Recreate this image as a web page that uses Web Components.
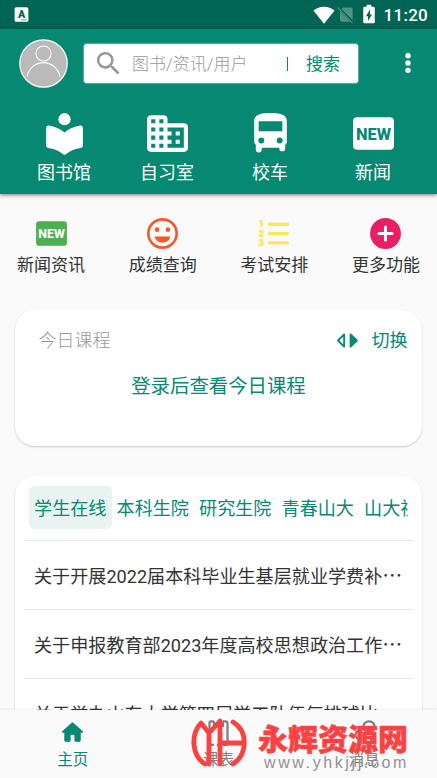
<!DOCTYPE html>
<html lang="zh-CN"><head><meta charset="utf-8"><title>主页</title>
<style>
body{margin:0;width:437px;height:778px;overflow:hidden;background:#fafafa;font-family:Roboto,"Noto Sans CJK SC",sans-serif;color:#333}
</style></head><body><campus-app></campus-app>
<script>
const ICONS={
input:'<rect x="1" y="0.5" width="22" height="23" rx="2.5"/><text x="12" y="17" font-size="17" font-weight="900" text-anchor="middle" fill="#006554">A</text><path d="M12 20.5h9" stroke="#006554" stroke-width="1.5" stroke-dasharray="2 1"/>',
wifi:'<path d="M12 21.5.4 7.2C3 5 7 3 12 3s9 2 11.600 4.200z"/>',
nosim:'<path d="M9 3h10a2 2 0 0 1 2 2v14L7 5zM5 8l13 13H7a2 2 0 0 1-2-2z"/><path d="m2 3 19 20" stroke="currentColor" stroke-width="1.500"/>',
battery:'<path fill-rule="evenodd" d="M17 4h-2.500V2h-5v2H7Q5.700 4 5.700 5.330v15.330Q5.700 22 7 22h10q1.300 0 1.300-1.330V5.330Q18.300 4 17 4zM11 19.500v-5H8.700L13 7v5.500h2.300z"/>',
user:'<circle cx="12" cy="12" r="11.600" fill="#bababa" stroke="#fff" stroke-width=".6"/><circle cx="12" cy="7.100" r="3.700" fill="none" stroke="#fff" stroke-width=".5"/><path d="M4 18.400a8.100 8.100 0 0 1 16 0" fill="none" stroke="#fff" stroke-width=".5"/>',
search:'<path d="M15.500 14h-.79l-.28-.27A6.471 6.471 0 0 0 16 9.500 6.500 6.500 0 1 0 9.500 16c1.610 0 3.090-.59 4.230-1.570l.27.28v.79l5 4.990L20.490 19l-4.990-5zm-6 0C7.010 14 5 11.990 5 9.500S7.010 5 9.500 5 14 7.010 14 9.500 11.990 14 9.500 14z"/>',
more:'<circle cx="12" cy="5.200" r="2.500"/><circle cx="12" cy="12" r="2.500"/><circle cx="12" cy="18.800" r="2.500"/>',
reader:'<circle cx="12" cy="5" r="3"/><path d="M12 11.550C10 9.700 7.200 8.400 4.200 8.050Q3 8 3 9.200v8.700q0 1.100 1.100 1.200c2.700.3 5.100 1.300 7 2.900q.9.700 1.800 0c1.900-1.600 4.300-2.600 7-2.900q1.100-.1 1.100-1.200V9.200q0-1.200-1.200-1.150C16.800 8.400 14 9.700 12 11.550z"/>',
building:'<path fill-rule="evenodd" d="M12 7V5a2 2 0 0 0-2-2H4a2 2 0 0 0-2 2v14a2 2 0 0 0 2 2h16a2 2 0 0 0 2-2V9a2 2 0 0 0-2-2zM6 19H4v-2h2zm0-4H4v-2h2zm0-4H4V9h2zm0-4H4V5h2zm4 12H8v-2h2zm0-4H8v-2h2zm0-4H8V9h2zm0-4H8V5h2zm10 12h-8v-2h2v-2h-2v-2h2v-2h-2V9h8zm-2-8h-2v2h2zm0 4h-2v2h2z"/>',
bus:'<path fill-rule="evenodd" d="M4 16V6c0-3.500 3.580-4 8-4s8 .5 8 4v10q0 1-.8 1.500v1.800a1.450 1.450 0 0 1-2.900 0V19H7.700v.8a1.450 1.450 0 0 1-2.900 0v-2.300Q4 17 4 16zM6.200 6v4.900h11.600V6zM7.500 14a1.450 1.450 0 1 0 0 2.900 1.450 1.450 0 0 0 0-2.900zm9 0a1.450 1.450 0 1 0 0 2.900 1.450 1.450 0 0 0 0-2.900z"/>',
fresh:'<rect x="2" y="4" width="20" height="16" rx="2"/><text x="3.400" y="15" font-family="Roboto" font-size="8.300" font-weight="800" textLength="17.200" lengthAdjust="spacingAndGlyphs" fill="var(--ink,#068873)">NEW</text>',
smile:'<circle cx="12" cy="12" r="9.200" fill="none" stroke="currentColor" stroke-width="1.700"/><circle cx="8.500" cy="9.500" r="1.500"/><circle cx="15.500" cy="9.500" r="1.500"/><path d="M7.300 14q-.5 0-.3.500a5.300 5.300 0 0 0 10 0q.2-.5-.3-.5z"/>',
list:'<path d="M8.500 6h12M8.500 12h12M8.500 18h12" stroke="currentColor" stroke-width="2" stroke-linecap="round"/><g font-size="5.800" font-weight="900" font-family="Roboto" stroke="currentColor" stroke-width=".3"><text x="1.800" y="8">1</text><text x="1.800" y="14">2</text><text x="1.800" y="20">3</text></g>',
plus:'<circle cx="12" cy="12" r="10"/><path d="M12 7.800v8.400M7.800 12h8.400" stroke="#fff" stroke-width="2" stroke-linecap="round"/>',
swap:'<path d="M8.500 5.600v12.800L2 12z" fill="none" stroke="currentColor" stroke-width="1.900" stroke-linejoin="round"/><path d="M15.200 5.600v12.800L21.800 12z" stroke="currentColor" stroke-width="1.900" stroke-linejoin="round"/>',
home:'<path d="M10 19v-5h4v5c0 .55.45 1 1 1h3c.55 0 1-.45 1-1v-7h1.700c.46 0 .68-.57.33-.87L12.670 3.600a1 1 0 0 0-1.340 0l-8.360 7.530c-.34.3-.13.870.33.870H5v7c0 .55.450 1 1 1h3c.55 0 1-.45 1-1z" stroke="currentColor" stroke-width=".6"/>',
board:'<path d="M8 2H5.500A1.500 1.500 0 0 0 4 3.500v18A1.500 1.500 0 0 0 5.500 23H8M16 2h2.500A1.500 1.500 0 0 1 20 3.500v18a1.500 1.500 0 0 1-1.500 1.500H16M10.500 23h3M8 2v4h8V2" fill="none" stroke="currentColor" stroke-width="2"/>',
chat:'<g fill="none" stroke="currentColor" stroke-width="2"><circle cx="16" cy="7" r="5"/><path d="M8 10a4 4 0 1 0 0 8M11 15q5 4 10 0"/><circle cx="15" cy="19" r="3"/></g>'};
function define(name,html){
 customElements.define(name,class extends HTMLElement{
  connectedCallback(){if(this.shadowRoot)return;const t=document.createElement('template');t.innerHTML=typeof html==='function'?html(this):html;
   this.attachShadow({mode:'open'}).append(t.content.cloneNode(true))}
 });
}
define('ui-icon',e=>`<style>:host{display:block;flex:none}svg{display:block}</style><svg width="${e.getAttribute('size')}" height="${e.getAttribute('size')}" viewBox="0 0 24 24" fill="currentColor">${ICONS[e.getAttribute('name')]}</svg>`);
define('status-bar',`<style>:host{display:flex;align-items:center;height:29px;background:#006554;color:#fff;padding:0 9px 0 14px;box-sizing:border-box}
span{flex:1}b{font:500 17px/29px Roboto,sans-serif;margin-left:4px;padding-top:2px;letter-spacing:.25px}.dim{color:#4d9487;margin:0 3px 0 1px}ui-icon[name=battery]{margin-top:-1px}</style>
<ui-icon name="input" size="15"></ui-icon><span></span><ui-icon name="wifi" size="22"></ui-icon><ui-icon class="dim" name="nosim" size="19"></ui-icon><ui-icon name="battery" size="22"></ui-icon><b>11:20</b>`);
define('search-box',`<style>:host{display:flex;align-items:center;box-sizing:border-box;width:274px;height:39px;background:#fff;border-radius:3px;box-shadow:0 0 1px 1px #5cae9f;color:#989898;font-size:17px;padding:0 18px 0 9px}
.hint{margin-left:8px;margin-top:-2px;flex:1;font-weight:300}.bar{width:1.500px;height:14px;background:#068873;margin-right:18px;margin-top:2px}.go{color:#068873;margin-top:-2px}</style>
<ui-icon name="search" size="31"></ui-icon><span class="hint">图书/资讯/用户</span><i class="bar"></i><span class="go">搜索</span>`);
define('menu-item',e=>`<style>:host{display:flex;flex-direction:column;align-items:center;white-space:nowrap}ui-icon{color:var(--tint,#fff)}span{font-size:var(--label,18px);line-height:var(--line,30px)}</style><ui-icon name="${e.getAttribute('icon')}" size="${e.getAttribute('size')}"></ui-icon><span><slot></slot></span>`);
define('app-header',`<style>:host{display:block;background:#068873;color:#fff;height:165px;box-shadow:0 1px 4px #0008}
.top{display:flex;align-items:center;height:68px;padding:0 16px 0 19px}search-box{margin-left:16px}.more{margin-left:auto}.menu{display:grid;grid-template-columns:repeat(4,103px);padding:12px 12px 0 12.500px}</style>
<div class="top"><ui-icon name="user" size="49"></ui-icon><search-box></search-box><ui-icon class="more" name="more" size="26"></ui-icon></div>
<div class="menu"><menu-item icon="reader" size="49">图书馆</menu-item><menu-item icon="building" size="49">自习室</menu-item><menu-item icon="bus" size="49">校车</menu-item><menu-item icon="fresh" size="49">新闻</menu-item></div>`);
define('quick-menu',`<style>:host{display:flex;justify-content:space-between;height:95px;padding:21px 17px 0;box-sizing:border-box;--label:17px;--line:26px}menu-item{width:68px}</style>
<menu-item icon="fresh" size="37" style="--tint:#4caf50;--ink:#fff">新闻资讯</menu-item><menu-item icon="smile" size="37" style="--tint:#f4592c">成绩查询</menu-item><menu-item icon="list" size="37" style="--tint:#fbe84e">考试安排</menu-item><menu-item icon="plus" size="37" style="--tint:#e91e63">更多功能</menu-item>`);
define('ui-card',`<style>:host{display:block;box-sizing:border-box;margin:0 15px;background:#fff;border-radius:20px;box-shadow:0 1px 2px #0003}</style><slot></slot>`);
define('today-panel',`<style>:host{display:block;padding:18px 14.500px 0 23.500px;height:118px;color:#068873}.row{display:flex;align-items:center;font-size:18px;line-height:26px}.t{color:#999;flex:1;font-weight:300}ui-icon{margin:-2px 13px 0 0}.login{text-align:center;font-size:19.400px;line-height:31px;margin:17px 9px 0 0}</style>
<div class="row"><span class="t">今日课程</span><ui-icon name="swap" size="23"></ui-icon><span>切换</span></div><div class="login">登录后查看今日课程</div>`);
define('news-row',`<style>:host{display:block;height:69px;box-sizing:border-box;border-top:1px solid #e8e8e8;line-height:71px;font-size:18.100px;padding-left:10px;white-space:nowrap;color:#333}span{font-family:"Noto Sans CJK SC";font-size:20px;line-height:1}</style><slot></slot><span lang="zh-CN">…</span>`);
define('news-panel',`<style>:host{display:block;padding:10px 9px 0;height:300px}.tabs{display:flex;width:379px;margin-left:5px;overflow:hidden;height:43px;margin-bottom:11px;color:#068873;font-size:18.100px;line-height:45px;white-space:nowrap}.tabs span{flex:none;width:82.500px;text-align:center}.tabs .on{background:#e9f4f2;border-radius:5px}</style>
<div class="tabs"><span class="on">学生在线</span><span>本科生院</span><span>研究生院</span><span>青春山大</span><span>山大视点</span></div>
<news-row>关于开展2022届本科毕业生基层就业学费补</news-row><news-row>关于申报教育部2023年度高校思想政治工作</news-row><news-row>关于举办山东大学第四届学工队伍气排球比</news-row>`);
define('nav-item',e=>`<style>:host{display:flex;flex-direction:column;align-items:center;font-size:15.500px;line-height:24px;padding-top:9px}span{margin-top:2px}</style><ui-icon name="${e.getAttribute('icon')}" size="27"></ui-icon><span><slot></slot></span>`);
define('bottom-nav',`<style>:host{display:grid;grid-template-columns:repeat(3,1fr);height:68px;background:#fafafa;color:#808080;box-shadow:0 -1px 3px #0001;position:relative}</style>
<nav-item icon="home" style="color:#068873">主页</nav-item><nav-item icon="board">课表</nav-item><nav-item icon="chat">消息</nav-item>`);
define('site-mark',`<style>:host{position:absolute;left:190px;top:716px;display:flex;white-space:nowrap;color:#fb4141}svg{display:block}.copy{margin-left:10px;padding-top:4px}.name{font:900 30px/34px "Noto Sans CJK SC",sans-serif;-webkit-text-stroke:.5px #fb4141}.url{font:16px/18px "Liberation Sans",sans-serif;color:#929292;letter-spacing:2.600px;padding-left:6px}</style>
<svg width="58" height="53" viewBox="0 0 58 53" fill="none" stroke="#fb4141" stroke-width="4.800" stroke-linecap="round" stroke-linejoin="round"><path d="M15 48C2 40 0 19 11 7l8 10L30 5M19 17v31M30 6v42M30 27h24M43 6c15 9 15 32 0 42"/></svg>
<div class="copy"><div class="name">永辉资源网</div><div class="url">www.yhkjjj.com</div></div>`);
define('campus-app',`<style>:host{display:flex;flex-direction:column;height:778px;width:437px;position:relative;overflow:hidden}status-bar,app-header,quick-menu,bottom-nav{flex:none}main{flex:1;min-height:0;overflow:hidden;padding-top:21px}ui-card+ui-card{margin-top:30px}</style>
<status-bar></status-bar><app-header></app-header><quick-menu></quick-menu><main><ui-card><today-panel></today-panel></ui-card><ui-card><news-panel></news-panel></ui-card></main><bottom-nav></bottom-nav><site-mark></site-mark>`);
</script></body></html>
